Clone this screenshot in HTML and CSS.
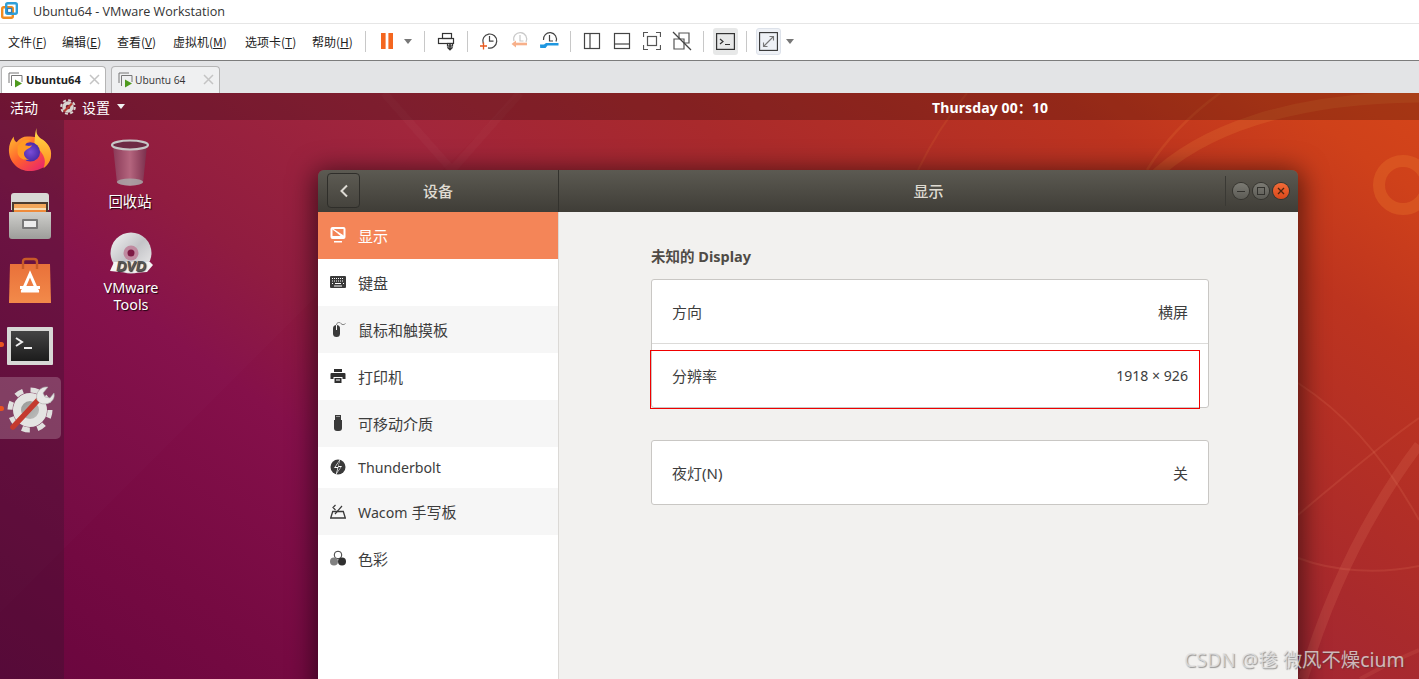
FILE: index.html
```html
<!DOCTYPE html>
<html lang="zh-CN">
<head>
<meta charset="utf-8">
<title>Ubuntu64 - VMware Workstation</title>
<link rel="stylesheet" href="styles.css">
</head>
<body>
<div class="app">
  <header class="titlebar">
    <svg class="vm-logo" width="17" height="17" viewBox="0 0 17 17"><rect x="1.2" y="5.2" width="10.6" height="10.6" rx="1.5" fill="none" stroke="#f28c1e" stroke-width="2.4"/><rect x="5.2" y="1.2" width="10.6" height="10.6" rx="1.5" fill="none" stroke="#2f9fd8" stroke-width="2.4"/><rect x="6.4" y="6.4" width="4.2" height="4.2" fill="none" stroke="#2f7fb8" stroke-width="1.4"/></svg>
    <span class="app-title">Ubuntu64 - VMware Workstation</span>
  </header>

  <nav class="toolbar">
    <div class="menu">
      <span>文件(<u>F</u>)</span><span>编辑(<u>E</u>)</span><span>查看(<u>V</u>)</span><span>虚拟机(<u>M</u>)</span><span>选项卡(<u>T</u>)</span><span>帮助(<u>H</u>)</span>
    </div>
    <i class="sep"></i>
    <div class="tb-pause">
      <svg width="12" height="16" viewBox="0 0 12 16"><rect width="4.6" height="16" fill="#f4661f"/><rect x="7.4" width="4.6" height="16" fill="#f4661f"/></svg>
      <i class="caret"></i>
    </div>
    <i class="sep"></i>
    <div class="tb-print">
      <svg width="20" height="20" viewBox="0 0 20 20" fill="none" stroke="#333" stroke-width="1.2"><rect x="5.5" y="2.5" width="9" height="5"/><rect x="1.5" y="7.5" width="15" height="5"/><rect x="10.5" y="12.5" width="5" height="2.5"/><path d="M13 12v6.5M10.5 16.3l2.5 2.5 2.5-2.5" stroke-width="1.5"/></svg>
    </div>
    <i class="sep"></i>
    <div class="tb-group">
      <span class="tb-icon"><svg width="20" height="20" viewBox="0 0 20 20" fill="none"><path d="M4.2 12.5A7 7 0 1 1 9 16.8" stroke="#444" stroke-width="1.2"/><path d="M10.5 5v5.2h4" stroke="#444" stroke-width="1.2"/><path d="M1 15h7M4.5 11.5v7" stroke="#e8581c" stroke-width="1.3"/></svg></span>
      <span class="tb-icon"><svg width="20" height="20" viewBox="0 0 20 20" fill="none"><path d="M5 10a6.5 6.5 0 1 1 12 1" stroke="#c9c9c9" stroke-width="1.2"/><path d="M11 4v6h3.5" stroke="#c9c9c9" stroke-width="1.2"/><path d="M18 13H6" stroke="#f7b08a" stroke-width="2.6"/><path d="M7 9.5L2.5 13 7 16.5z" fill="#f7b08a"/></svg></span>
      <span class="tb-icon"><svg width="20" height="20" viewBox="0 0 20 20" fill="none"><path d="M4.5 9a6.5 6.5 0 1 1 12.5 1.5" stroke="#444" stroke-width="1.2"/><path d="M10.5 4v6h3.5" stroke="#444" stroke-width="1.2"/><path d="M1 13.5h4l2-1.5h12.5v2.6H8.5l-2 2.4H1.2z" fill="#1f97e0"/></svg></span>
    </div>
    <i class="sep"></i>
    <div class="tb-group">
      <span class="tb-icon"><svg width="18" height="18" viewBox="0 0 18 18" fill="none" stroke="#444" stroke-width="1.2"><rect x="1.5" y="1.5" width="15" height="15"/><path d="M7 1.500v15"/></svg></span>
      <span class="tb-icon"><svg width="18" height="18" viewBox="0 0 18 18" fill="none" stroke="#444" stroke-width="1.2"><rect x="1.5" y="1.5" width="15" height="15"/><path d="M1.500 12h15"/></svg></span>
      <span class="tb-icon"><svg width="18" height="18" viewBox="0 0 18 18" fill="none" stroke="#555" stroke-width="1.2"><path d="M.5 5V.5H5M13 .5h4.500V5M17.500 13v4.500H13M5 17.500H.5V13"/><rect x="4.500" y="4.500" width="9" height="9"/></svg></span>
      <span class="tb-icon"><svg width="20" height="20" viewBox="0 0 20 20" fill="none" stroke="#555" stroke-width="1.2"><path d="M2 8h10v10H2zM7 8V2h10v10h-5"/><path d="M1 1l18 18" stroke="#444"/></svg></span>
    </div>
    <i class="sep"></i>
    <div class="tb-toggle tb-console"><svg width="19" height="17" viewBox="0 0 19 17" fill="none" stroke="#333" stroke-width="1.2"><rect x=".6" y=".6" width="17.800" height="15.800"/><path d="M4 6l3 2.500-3 2.500M9 11.500h5"/></svg></div>
    <i class="sep"></i>
    <div class="tb-toggle tb-full"><svg width="19" height="19" viewBox="0 0 19 19" fill="none" stroke="#333" stroke-width="1.100"><rect x=".6" y=".6" width="17.800" height="17.800"/><path d="M5 14l9-9M10.500 4.500H14.500V8.500M4.500 10.500V14.500H8.500" stroke="#777"/></svg></div>
    <i class="caret caret-full"></i>
  </nav>

  <div class="tabstrip">
    <div class="tab tab-active">
      <svg class="tab-icon" width="16" height="16" viewBox="0 0 16 16" fill="none"><path d="M1 11V1h10" stroke="#777"/><path d="M3.500 14V3.500H14V10" stroke="#777"/><path d="M7 7.500l7 4-7 4z" fill="#4e9a1e"/></svg>
      <span class="tab-label">Ubuntu64</span>
      <svg class="tab-x" width="11" height="11" viewBox="0 0 11 11"><path d="M1 1l9 9M10 1l-9 9" stroke="#c4c4c4" stroke-width="1.500"/></svg>
    </div>
    <div class="tab">
      <svg class="tab-icon" width="16" height="16" viewBox="0 0 16 16" fill="none"><path d="M1 11V1h10" stroke="#777"/><path d="M3.500 14V3.500H14V10" stroke="#777"/><path d="M7 7.500l7 4-7 4z" fill="#4e9a1e"/></svg>
      <span class="tab-label tab-label-plain">Ubuntu 64</span>
      <svg class="tab-x" width="11" height="11" viewBox="0 0 11 11"><path d="M1 1l9 9M10 1l-9 9" stroke="#c4c4c4" stroke-width="1.500"/></svg>
    </div>
  </div>

  <main class="screen">
    <svg class="wall-art" width="1419" height="586" viewBox="0 93 1419 586" fill="none">
      <path d="M0 613L520 93H0z" fill="#fff" opacity=".012"/>
      <circle cx="1403" cy="185" r="24" stroke="#e8702a" stroke-opacity=".38" stroke-width="12"/>
      <path d="M1150 180C1200 130 1290 98 1419 97" stroke="#f08a3c" stroke-opacity=".2" stroke-width="11"/>
      <path d="M1147 170C1165 140 1190 115 1220 93" stroke="#f08a3c" stroke-opacity=".16" stroke-width="2.500"/>
      <path d="M918 170C930 145 945 120 967 93" stroke="#f08a3c" stroke-opacity=".12" stroke-width="2"/>
      <path d="M1303 679C1330 590 1370 510 1419 445" stroke="#f08a6c" stroke-opacity=".17" stroke-width="10"/>
      <path d="M1298 383C1340 410 1380 450 1419 520" stroke="#f08a6c" stroke-opacity=".15" stroke-width="2"/>
      <path d="M1298 515C1340 480 1380 445 1419 418" stroke="#f08a6c" stroke-opacity=".15" stroke-width="2"/>
      <path d="M1298 558C1335 572 1380 574 1419 566" stroke="#f08a6c" stroke-opacity=".15" stroke-width="2"/>
      <path d="M1360 679C1380 668 1400 658 1419 650" stroke="#f08a6c" stroke-opacity=".13" stroke-width="4"/>
      <path d="M384 93L452 170M520 93L452 170" stroke="#fff" stroke-opacity=".025" stroke-width="8"/>
    </svg>

    <div class="topbar">
      <span class="activities">活动</span>
      <span class="app-menu">
        <svg width="16" height="16" viewBox="0 0 16 16"><circle cx="8" cy="8" r="6.800" fill="none" stroke="#d8d4d0" stroke-width="2" stroke-dasharray="3 2.340"/><circle cx="8" cy="8" r="4" fill="none" stroke="#d8d4d0" stroke-width="3.400"/><path d="M4 12.500L12 4.500" stroke="#b33a2f" stroke-width="2.200"/></svg>
        <span class="app-name">设置</span>
        <i class="caret caret-white"></i>
      </span>
      <span class="clock">Thursday 00：10</span>
    </div>

    <div class="stage">
      <aside class="dock">
        <svg class="dock-icon dk-firefox" width="46" height="48" viewBox="0 0 48 48">
          <defs>
            <linearGradient id="ffa" x1="0" y1="0" x2="1" y2="1"><stop offset="0" stop-color="#ffbd2e"/><stop offset=".45" stop-color="#ff5f2e"/><stop offset="1" stop-color="#e3157f"/></linearGradient>
            <linearGradient id="ffb" x1="0" y1="0" x2="0" y2="1"><stop offset="0" stop-color="#ffe14a"/><stop offset="1" stop-color="#ff8a1f"/></linearGradient>
            <radialGradient id="ffc"><stop offset="0" stop-color="#7a4dd8"/><stop offset="1" stop-color="#4a2aa8"/></radialGradient>
          </defs>
          <path d="M24 46C11 46 2 36 2 24 2 19 4 14 7 10c0 3 1 5 3 6 3-4 7-6 11-6 8 0 17 2 20 7 3 3 5 6 5 11 0 11-10 18-22 18z" fill="url(#ffa)"/>
          <path d="M31 1c-1 6 1 9 6 12 6 4 9 10 9 15 0 7-3 12-8 15 2-5 2-9 0-13-2-5-6-8-11-9 3-4 1-13 4-20z" fill="url(#ffb)"/>
          <circle cx="24.500" cy="26" r="10" fill="url(#ffc)"/>
          <path d="M11 20c4-6 9-8 14-6-3 1-5 2-6 5 3 1 5 1 7 0-1 3-6 4-8 7-1 3 1 7 5 8-6 1-11-2-12-7z" fill="#ff9a24"/>
        </svg>
        <svg class="dock-icon dk-files" width="44" height="46" viewBox="0 0 44 46">
          <defs><linearGradient id="cab" x1="0" y1="0" x2="0" y2="1"><stop offset="0" stop-color="#cfcfcc"/><stop offset="1" stop-color="#9d9d9a"/></linearGradient></defs>
          <path d="M3 3q0-3 3-3h32q3 0 3 3v14H3z" fill="#d8d8d5"/>
          <rect x="4" y="9" width="36" height="13" fill="#4b3b2f"/>
          <rect x="6" y="11" width="32" height="4" fill="#f2a65a"/><rect x="6" y="15" width="32" height="2" fill="#f8dfb8"/><rect x="6" y="17" width="32" height="2" fill="#ee8a3a"/>
          <path d="M1 19h42v24q0 3-3 3H4q-3 0-3-3z" fill="url(#cab)"/>
          <rect x="14" y="26" width="16" height="10" rx="1" fill="#777"/><rect x="16" y="28" width="12" height="6" fill="#ececec"/>
        </svg>
        <svg class="dock-icon dk-store" width="44" height="46" viewBox="0 0 44 46">
          <defs><linearGradient id="bag" x1="0" y1="0" x2="0" y2="1"><stop offset="0" stop-color="#e9713a"/><stop offset="1" stop-color="#f28a4a"/></linearGradient></defs>
          <path d="M2 7h40l1 39H1z" fill="url(#bag)"/>
          <path d="M15 12V5q0-3 3-3h8q3 0 3 3v7" fill="none" stroke="#c85a28" stroke-width="2.400"/>
          <path d="M22 17l-7 16h14z" fill="none" stroke="#fff" stroke-width="3"/>
          <rect x="12" y="29" width="20" height="3" fill="#fff"/><rect x="13" y="33" width="18" height="2.500" fill="#fff"/>
        </svg>
        <svg class="dock-icon dk-term" width="46" height="38" viewBox="0 0 46 38">
          <defs><linearGradient id="tm" x1="0" y1="0" x2="0" y2="1"><stop offset="0" stop-color="#444"/><stop offset="1" stop-color="#1c1c1c"/></linearGradient></defs>
          <rect width="46" height="38" rx="1" fill="#d8d8d6"/>
          <rect x="4" y="4" width="38" height="30" fill="url(#tm)"/>
          <path d="M9 11l6 4-6 4" fill="none" stroke="#eee" stroke-width="2"/><path d="M17 21h8" stroke="#eee" stroke-width="2"/>
        </svg>
        <div class="dock-active">
          <svg width="50" height="50" viewBox="0 0 50 50">
            <defs><linearGradient id="hub" x1="0" y1="0" x2="1" y2="1"><stop offset="0" stop-color="#8f8f8d"/><stop offset="1" stop-color="#c8c8c6"/></linearGradient></defs>
            <circle cx="24" cy="27" r="20" fill="none" stroke="#e0e0de" stroke-width="5" stroke-dasharray="8 7.700"/>
            <circle cx="24" cy="27" r="13" fill="url(#hub)" stroke="#e4e4e2" stroke-width="8"/>
            <path d="M7 44L34 15" stroke="#c43a2f" stroke-width="5.500" stroke-linecap="round"/>
            <path d="M31 17c-2-7 3-14 11-13l-5 6 2 4 5 1 4-5c2 9-8 13-14 10z" fill="#e8e8e6" stroke="#aaa" stroke-width=".6"/>
          </svg>
        </div>
        <i class="dock-dot dot-term"></i>
        <i class="dock-dot dot-set"></i>
      </aside>

      <div class="desk-item desk-trash">
        <svg width="40" height="48" viewBox="0 0 40 48"><defs><linearGradient id="tr" x1="0" y1="0" x2="1" y2="0"><stop offset="0" stop-color="#8a3a58"/><stop offset=".5" stop-color="#b4657e"/><stop offset="1" stop-color="#7a2f4c"/></linearGradient></defs><path d="M3 7l4 37q6 3 13 3t13-3l4-37z" fill="url(#tr)"/><ellipse cx="20" cy="43" rx="13" ry="3.500" fill="#aaa" opacity=".8"/><ellipse cx="20" cy="6" rx="18" ry="4.500" fill="#6d2a44" stroke="#c6c6c6" stroke-width="2.200"/></svg>
        <span>回收站</span>
      </div>
      <div class="desk-item desk-dvd">
        <svg width="44" height="44" viewBox="0 0 44 44"><defs><linearGradient id="dv" x1="0" y1="0" x2="1" y2="1"><stop offset="0" stop-color="#f4f4f4"/><stop offset=".5" stop-color="#c4c4c8"/><stop offset="1" stop-color="#efefef"/></linearGradient></defs><circle cx="22" cy="21" r="20.500" fill="url(#dv)"/><circle cx="22" cy="21" r="7.500" fill="#c08aa0"/><circle cx="22" cy="21" r="3.500" fill="#7d1a44"/><path d="M1 39l4-9h36l3 3-6 7q-16 2-37-1z" fill="#f4f4f4"/><text class="dvd-text" x="22" y="38.500" text-anchor="middle">DVD</text></svg>
        <span>VMware<br>Tools</span>
      </div>

      <section class="window">
        <div class="win-head">
          <div class="head-left">
            <button class="back"><svg width="10" height="14" viewBox="0 0 10 14"><path d="M8 1.500L2.500 7 8 12.500" fill="none" stroke="#dedbd4" stroke-width="2"/></svg></button>
            <span class="head-title">设备</span>
          </div>
          <div class="head-right">
            <span class="head-title">显示</span>
            <div class="win-btns">
              <span class="wbtn"><svg width="10" height="10" viewBox="0 0 10 10"><path d="M1 5.500h8" stroke="#33322e" stroke-width="1"/></svg></span>
              <span class="wbtn"><svg width="10" height="10" viewBox="0 0 10 10"><rect x="1.500" y="1.500" width="7" height="7" fill="none" stroke="#33322e"/></svg></span>
              <span class="wbtn wbtn-close"><svg width="10" height="10" viewBox="0 0 10 10"><path d="M2 2l6 6M8 2l-6 6" stroke="#4a2410" stroke-width="1.300"/></svg></span>
            </div>
          </div>
        </div>
        <div class="win-body">
          <ul class="side">
            <li class="side-row selected"><svg width="16" height="16" viewBox="0 0 16 16"><rect x=".5" y="0" width="15" height="12" rx="2" fill="#fff"/><path d="M2.500 2h11v7z" fill="#f48558"/><path d="M2.500 2l8 7h-8z" fill="#f48558"/><path d="M2.500 2l11 7" stroke="#fff" stroke-width="1.200"/><path d="M4 14h8v1.600H4z" fill="#fff"/></svg><span>显示</span></li>
            <li class="side-row"><svg width="16" height="16" viewBox="0 0 16 16"><rect y="2" width="16" height="12" rx="1" fill="#3a3a3a"/><path d="M2 4.500h12M2 7h12" stroke="#fff" stroke-dasharray="1 1"/><path d="M2 9.500h1M5 9.500h6M13 9.500h1M4 12h8" stroke="#fff"/></svg><span>键盘</span></li>
            <li class="side-row alt"><svg width="16" height="16" viewBox="0 0 16 16"><rect x="3" y="4" width="7" height="12" rx="3.500" fill="#3a3a3a"/><path d="M6.500 4v5" stroke="#f6f6f6"/><path d="M6.500 4C6.500 1 10 1 11 2.500S14 4 15.500 2.500" fill="none" stroke="#666" stroke-width=".8"/></svg><span>鼠标和触摸板</span></li>
            <li class="side-row"><svg width="16" height="16" viewBox="0 0 16 16"><path d="M4 1h8v3H4zM1.500 5h13q1 0 1 1v5h-3v-2h-9v2h-3V6q0-1 1-1zM4.500 10h7v5h-7z" fill="#2f2f2f"/><path d="M6 12h4" stroke="#fff"/></svg><span>打印机</span></li>
            <li class="side-row alt"><svg width="16" height="16" viewBox="0 0 16 16"><path d="M5 0h6v5H5z" fill="#3a3a3a"/><path d="M6.500 1.500h1M8.500 1.500h1" stroke="#f6f6f6"/><path d="M4 5h8v8a3 3 0 0 1-3 3H7a3 3 0 0 1-3-3z" fill="#3a3a3a"/></svg><span>可移动介质</span></li>
            <li class="side-row short"><svg width="16" height="16" viewBox="0 0 16 16"><circle cx="8" cy="8" r="7.500" fill="#3a3a3a"/><path d="M10.500-.5L4 9h3.500L5.500 16.500 12 7H8.500z" fill="#fff"/><path d="M9.600 1.500L5.500 8h3L7 13.500 10.800 8H8z" fill="#3a3a3a"/></svg><span class="latin">Thunderbolt</span></li>
            <li class="side-row alt"><svg width="16" height="16" viewBox="0 0 16 16" fill="none" stroke="#3a3a3a" stroke-width="1.300"><path d="M.7 15l2-6.500h10.600l2 6.500z"/><path d="M5 11l7-8M5.500 2L3 4.500 5.500 7" stroke-width="1.200"/></svg><span><span class="latin">Wacom</span> 手写板</span></li>
            <li class="side-row"><svg width="16" height="16" viewBox="0 0 16 16"><circle cx="8" cy="5" r="3.800" fill="#fff" stroke="#3a3a3a"/><circle cx="4" cy="11.500" r="4" fill="#808080"/><circle cx="12" cy="11.500" r="4" fill="#2f2f2f"/></svg><span>色彩</span></li>
          </ul>
          <div class="content">
            <h2 class="section-title">未知的 Display</h2>
            <div class="card">
              <div class="row"><span>方向</span><span>横屏</span></div>
              <div class="row row-line"><span>分辨率</span><span class="num">1918 × 926</span></div>
            </div>
            <div class="card">
              <div class="row"><span>夜灯(N)</span><span>关</span></div>
            </div>
          </div>
        </div>
      </section>

      <div class="red-box"></div>
      <div class="watermark">CSDN @毶 微风不燥cium</div>
    </div>
  </main>
</div>
</body>
</html>
```

FILE: styles.css
```css
* { box-sizing: border-box; }
html, body { margin: 0; padding: 0; }
body {
  width: 1419px;
  height: 679px;
  overflow: hidden;
  font-family: "Noto Sans", "Noto Sans CJK SC", sans-serif;
  background: #fff;
}
i { display: block; font-style: normal; }
.app { display: flex; flex-direction: column; height: 679px; }

/* VMware chrome */
.titlebar {
  height: 24px;
  display: flex;
  align-items: center;
  padding-left: 1px;
  background: #fff;
  border-bottom: 1px solid #e6e6e6;
}
.vm-logo { margin-top: -2px; }
.app-title {
  margin-left: 15px;
  font: 12.6px "Open Sans", "Noto Sans CJK SC", sans-serif;
  color: #333;
  white-space: nowrap;
}
.toolbar {
  height: 37px;
  padding-bottom: 2px;
  display: flex;
  align-items: center;
  background: #fff;
  border-bottom: 1px solid #7c7c7c;
}
.menu {
  width: 365px;
  padding-left: 8px;
  display: grid;
  grid-template-columns: 54px 55px 56px 72px 67px auto;
  font: 12px "Noto Sans CJK SC", sans-serif;
  color: #222;
  white-space: nowrap;
}
.sep { width: 1px; height: 21px; background: #c8c8c8; flex: none; }
.caret { width: 0; height: 0; border: 4.5px solid transparent; border-top: 5px solid #777; border-bottom: 0; flex: none; }
.tb-pause { width: 58px; padding-left: 15px; display: flex; align-items: center; gap: 11px; }
.tb-print { width: 42px; display: flex; justify-content: center; padding-left: 1px; }
.tb-group { padding: 0 6px; display: flex; }
.tb-icon { width: 30px; display: flex; justify-content: center; align-items: center; }
.tb-toggle {
  width: 25px;
  height: 27px;
  display: flex;
  align-items: center;
  justify-content: center;
  border-radius: 3px;
}
.tb-console { margin: 0 8px 0 9px; background: #e7e8e8; }
.tb-full { margin-left: 9px; background: #eef1f6; border: 1px solid #dde2ea; }
.caret-full { margin-left: 5px; }

.tabstrip {
  height: 32px;
  padding: 5px 0 0 1px;
  display: flex;
  gap: 5px;
  background: #e3e4e6;
}
.tab {
  width: 109px;
  height: 27px;
  display: flex;
  align-items: center;
  padding: 0 5px 1px 6px;
  background: #eff0f1;
  border: 1px solid #b5b5b5;
  border-bottom: 0;
  border-radius: 4px 4px 0 0;
  color: #333;
  font: 10.2px "Open Sans", sans-serif;
}
.tab-active { width: 105px; background: #fff; font-size: 11.1px; font-weight: 700; color: #222; }
.tab-icon { flex: none; }
.tab-label { margin-left: 2px; flex: 1; }
.tab-label-plain { margin-left: 1px; }
.tab-x { flex: none; }

/* Ubuntu desktop */
.screen {
  position: relative;
  flex: 1;
  min-height: 0;
  overflow: hidden;
  background: linear-gradient(36deg, #690640 0%, #6d073f 5%, #760a42 14%, #85104a 28.8%, #8f1a3e 37.2%, #a0243a 52.2%, #a92a2c 65.7%, #bd341f 83.7%, #cf411a 93.7%, #d5451a 100%);
  display: flex;
  flex-direction: column;
}
.wall-art { position: absolute; left: 0; top: 0; }
.topbar {
  position: relative;
  height: 27px;
  flex: none;
  display: flex;
  align-items: center;
  padding-left: 10px;
  background: rgba(0, 0, 0, .22);
  color: #fff;
  font: 14px "Noto Sans CJK SC", sans-serif;
}
.activities { width: 50px; }
.app-menu { display: flex; align-items: center; }
.app-name { margin-left: 6px; }
.caret-white { margin-left: 7px; border-top-color: #f2f2f2; }
.clock {
  position: absolute;
  left: 932px;
  font: 700 14px "Noto Sans", "Noto Sans CJK SC", sans-serif;
  letter-spacing: .12px;
  white-space: nowrap;
}
.stage { position: relative; flex: 1; min-height: 0; }
.dock {
  position: absolute;
  left: 0;
  top: 0;
  bottom: 0;
  width: 64px;
  display: flex;
  flex-direction: column;
  background: rgba(40, 20, 40, .28);
}
.dock-icon { display: block; flex: none; }
.dk-firefox { margin: 6px 0 0 7px; }
.dk-files { margin: 19px 0 0 8px; }
.dk-store { margin: 18px 0 0 8px; }
.dk-term { margin: 24px 0 0 7px; }
.dock-active {
  margin-top: 12px;
  width: 61px;
  height: 62px;
  border-radius: 0 5px 5px 0;
  background: rgba(255, 255, 255, .2);
  display: flex;
  align-items: center;
  justify-content: center;
}
.dock-dot { position: absolute; left: 0; width: 4px; height: 5px; border-radius: 0 3px 3px 0; background: #e95420; }
.dot-term { top: 222px; }
.dot-set { top: 286px; }

.desk-item {
  position: absolute;
  width: 90px;
  display: flex;
  flex-direction: column;
  align-items: center;
  color: #fff;
  font: 14.4px/17px "Noto Sans", "Noto Sans CJK SC", sans-serif;
  text-align: center;
  text-shadow: 1px 1px 1px rgba(0, 0, 0, .8);
}
.desk-trash { left: 85px; top: 19px; gap: 6px; }
.desk-dvd { left: 86px; top: 112px; gap: 3px; }
.dvd-text { font: italic 700 14px "Liberation Sans", sans-serif; fill: #555; }

.window {
  position: absolute;
  left: 318px;
  top: 50px;
  width: 980px;
  height: 560px;
  display: flex;
  flex-direction: column;
  border-radius: 6px 6px 0 0;
  overflow: hidden;
  box-shadow: 0 4px 26px 4px rgba(0, 0, 0, .55);
}
.win-head {
  height: 42px;
  flex: none;
  display: flex;
  background: linear-gradient(#5c5a52, #3f3d37);
  color: #dfdbd2;
  font: 500 15px "Noto Sans CJK SC", sans-serif;
}
.head-left {
  width: 241px;
  flex: none;
  position: relative;
  display: flex;
  align-items: center;
  justify-content: center;
  padding-bottom: 2px;
  border-right: 1px solid #33322d;
}
.head-right { flex: 1; position: relative; display: flex; align-items: center; justify-content: center; padding-bottom: 2px; }
.back {
  position: absolute;
  left: 9px;
  top: 3px;
  width: 33px;
  height: 35px;
  padding: 0;
  display: flex;
  align-items: center;
  justify-content: center;
  background: rgba(255, 255, 255, .02);
  border: 1px solid #2f2e2a;
  border-radius: 4px;
}
.win-btns {
  position: absolute;
  right: 9px;
  top: 13px;
  display: flex;
  gap: 4px;
  padding-left: 6px;
}
.win-btns::before { content: ""; position: absolute; left: -2px; top: -7px; width: 1px; height: 30px; background: #3a3934; }
.wbtn {
  width: 16px;
  height: 16px;
  border-radius: 50%;
  display: flex;
  align-items: center;
  justify-content: center;
  background: linear-gradient(#7b7a73, #5c5b55);
  box-shadow: 0 0 0 1px #35342f;
}
.wbtn-close { background: linear-gradient(#f26b37, #d9481b); }
.win-body { flex: 1; display: flex; min-height: 0; }
.side {
  width: 241px;
  flex: none;
  margin: 0;
  padding: 0;
  list-style: none;
  background: #fff;
  border-right: 1px solid #dbd9d6;
  color: #3d3d3d;
  font: 15px "Noto Sans", "Noto Sans CJK SC", sans-serif;
}
.side-row { height: 47px; display: flex; align-items: center; gap: 12px; padding-left: 12px; }
.side-row.short { height: 41px; padding-bottom: 1px; }
.side-row.alt { background: #f6f6f6; }
.side-row.selected { background: #f48558; color: #fff; }
.side-row svg { flex: none; margin-top: -1px; }
.latin { font-size: 14.2px; }
.content { flex: 1; padding: 35px 0 0 92px; background: #f2f1ef; color: #3d3d3d; }
.section-title {
  margin: 0 0 14px;
  height: 18px;
  font: 700 14.5px/18px "Noto Sans", "Noto Sans CJK SC", sans-serif;
  color: #4f4b46;
}
.card {
  width: 558px;
  margin-bottom: 32px;
  background: #fff;
  border: 1px solid #c9c7c4;
  border-radius: 3px;
}
.row {
  height: 63px;
  padding: 0 20px;
  display: flex;
  align-items: center;
  justify-content: space-between;
  font: 15px "Noto Sans", "Noto Sans CJK SC", sans-serif;
}
.row-line { height: 64px; border-top: 1px solid #dcdbd9; }
.num { font-size: 14.1px; }
.red-box {
  position: absolute;
  left: 650px;
  top: 230px;
  width: 550px;
  height: 59px;
  border: 1px solid #f00000;
}
.watermark {
  position: absolute;
  left: 1184px;
  top: 527px;
  color: rgba(225, 225, 225, .78);
  font: 19.4px/26px "Noto Sans", "Noto Sans CJK SC", sans-serif;
  text-shadow: 1px 1px 1px rgba(60, 60, 60, .5);
  white-space: nowrap;
}
```
